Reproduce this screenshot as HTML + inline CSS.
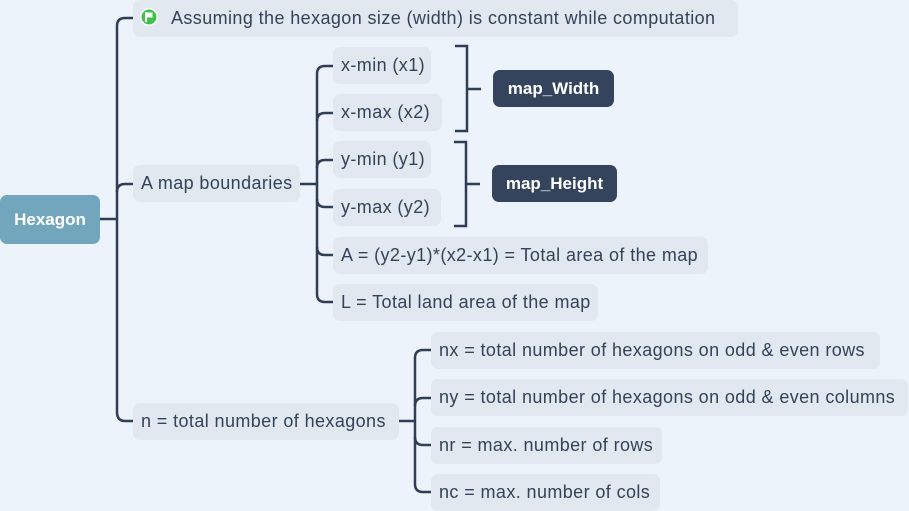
<!DOCTYPE html>
<html><head><meta charset="utf-8"><style>
body{margin:0;width:909px;height:510px;background:#edf3fa;position:relative;overflow:hidden;font-family:"Liberation Sans",sans-serif;}
.n{position:absolute;background:#e1e8f0;border-radius:7px;color:#33435a;font-size:18px;letter-spacing:0.4px;line-height:37px;height:37px;padding-left:8px;box-sizing:border-box;white-space:nowrap;overflow:hidden;}
.d{position:absolute;background:#34445c;border-radius:7px;color:#fff;font-size:17px;font-weight:bold;line-height:37px;height:37px;text-align:center;}
svg{position:absolute;left:0;top:0;}
</style></head><body>
<svg width="909" height="510" fill="none" stroke="#2f3e55" stroke-width="2.5">
<path d="M100 219H117"/>
<path d="M133 18H125Q117 18 117 26V412Q117 421 125 421H133"/>
<path d="M117 192Q117 184 125 184H133"/>
<path d="M300 184H317"/>
<path d="M333 66H325Q317 66 317 74V294Q317 302 325 302H333"/>
<path d="M317 121Q317 113 325 113H333"/>
<path d="M317 168Q317 160 325 160H333"/>
<path d="M317 199Q317 207 325 207H333"/>
<path d="M317 247Q317 255 325 255H333"/>
<path d="M399 421H415"/>
<path d="M431 350H423Q415 350 415 358V484Q415 492 423 492H431"/>
<path d="M415 406Q415 398 423 398H431"/>
<path d="M415 437Q415 445 423 445H431"/>
<path d="M455 46H467V131H455M467 89H481"/>
<path d="M454 142H466V226H454M466 184H480"/>
</svg>
<div style="position:absolute;left:0;top:195px;width:100px;height:49px;background:#72a6bd;border-radius:7px;color:#fff;font-weight:bold;font-size:17px;line-height:49px;text-align:center;">Hexagon</div>
<div class="n" style="left:133px;top:0;width:605px;padding-left:38px;">Assuming the hexagon size (width) is constant while computation</div>
<svg width="20" height="20" style="left:139px;top:7px" stroke="none"><circle cx="10" cy="10" r="9" fill="#fff"/><circle cx="10" cy="10" r="7.5" fill="#3fc24d"/><path d="M7 5V15" stroke="#fff" stroke-width="2"/><path d="M8 5.5H13.5V10.5H8Z" fill="#fff"/></svg>
<div class="n" style="left:133px;top:165px;width:167px;">A map boundaries</div>
<div class="n" style="left:333px;top:47px;width:98px;">x-min (x1)</div>
<div class="n" style="left:333px;top:94px;width:109px;">x-max (x2)</div>
<div class="n" style="left:333px;top:141px;width:98px;">y-min (y1)</div>
<div class="n" style="left:333px;top:189px;width:108px;">y-max (y2)</div>
<div class="n" style="left:333px;top:237px;width:375px;">A = (y2-y1)*(x2-x1) = Total area of the map</div>
<div class="n" style="left:333px;top:284px;width:265px;">L = Total land area of the map</div>
<div class="d" style="left:493px;top:70px;width:121px;">map_Width</div>
<div class="d" style="left:492px;top:165px;width:125px;">map_Height</div>
<div class="n" style="left:133px;top:403px;width:266px;">n = total number of hexagons</div>
<div class="n" style="left:431px;top:332px;width:449px;">nx = total number of hexagons on odd &amp; even rows</div>
<div class="n" style="left:431px;top:379px;width:477px;">ny = total number of hexagons on odd &amp; even columns</div>
<div class="n" style="left:431px;top:427px;width:231px;">nr = max. number of rows</div>
<div class="n" style="left:431px;top:474px;width:229px;">nc = max. number of cols</div>
</body></html>
